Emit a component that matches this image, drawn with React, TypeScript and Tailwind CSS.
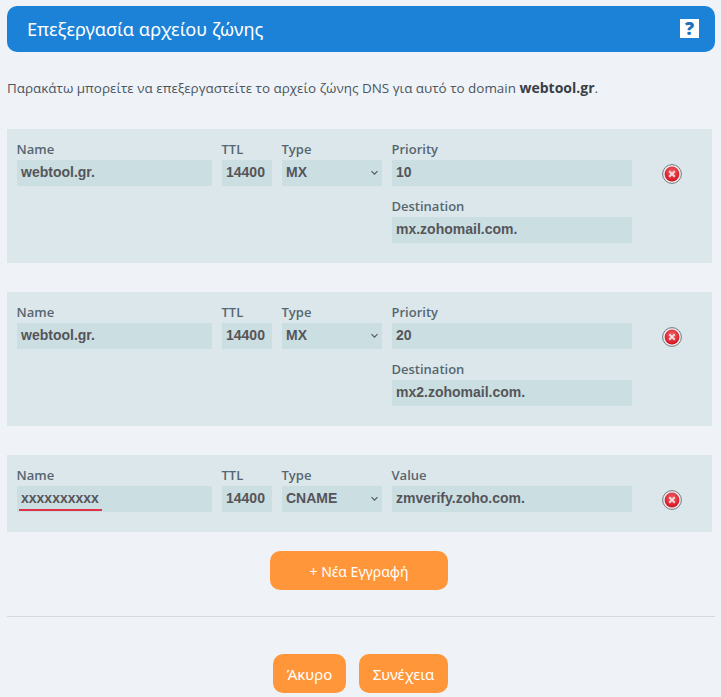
import React from "react";

function Field({ label, value, className = "", chevron = false }: { label: string; value: string; className?: string; chevron?: boolean }) {
  return (
    <div className={`flex flex-col ${className}`}>
      <div className="h-[22px] pt-[2px] -ml-[0.5px] text-[13px] leading-[18px] font-semibold text-[#56666f] font-['Open_Sans',sans-serif]">{label}</div>
      <div className="relative h-[26px] bg-[#cbdee2] pl-[4px] text-[14px] leading-[24px] font-bold text-[#555559] font-['Liberation_Sans',sans-serif]">
        {value}
        {chevron && (
          <svg className="absolute right-[3px] top-[10px] w-[9px] h-[6px]" viewBox="0 0 9 6" fill="none">
            <path d="M1.5 1.2 L4.5 4.2 L7.5 1.2" stroke="#555" strokeWidth="1.1" />
          </svg>
        )}
      </div>
    </div>
  );
}

function DeleteIcon() {
  return (
    <svg width="20" height="20" viewBox="0 0 20 20" className="block">
      <defs>
        <radialGradient id="redg" cx="50%" cy="35%" r="65%">
          <stop offset="0%" stopColor="#f4606a" />
          <stop offset="100%" stopColor="#d0141f" />
        </radialGradient>
      </defs>
      <circle cx="10" cy="10" r="9.4" fill="#e8ecee" stroke="#77797b" strokeWidth="1" />
      <circle cx="10" cy="10" r="7.4" fill="url(#redg)" />
      <path d="M7.2 7.2 L12.8 12.8 M12.8 7.2 L7.2 12.8" stroke="#f3d9d9" strokeWidth="2" />
    </svg>
  );
}

function Row({ name, type, third, thirdLabel, dest, underline = false, className = "" }: { name: string; type: string; third: string; thirdLabel: string; dest?: string; underline?: boolean; className?: string }) {
  return (
    <div className={`w-[705px] bg-[#dce7eb] pl-[10px] pt-[9px] flex ${dest ? "h-[134px]" : "h-[77px]"} ${className}`}>
      <div className="relative w-[195px] mr-[10px]">
        <Field label="Name" value={name} />
        {underline && <div className="absolute left-[2px] top-[45px] w-[83px] h-[2px] bg-[#e0324b]" />}
      </div>
      <Field label="TTL" value="14400" className="w-[50px] mr-[10px]" />
      <Field label="Type" value={type} chevron className="w-[100px] mr-[10px]" />
      <div className="w-[240px] flex flex-col gap-[9px]">
        <Field label={thirdLabel} value={third} />
        {dest && <Field label="Destination" value={dest} />}
      </div>
      <div className="ml-[30px] mt-[26px]"><DeleteIcon /></div>
    </div>
  );
}

function OrangeButton({ children, className = "" }: { children: React.ReactNode; className?: string }) {
  return (
    <button className={`h-[39px] pt-[1px] rounded-[10px] bg-[#ff973a] text-white font-['Noto_Sans',sans-serif] ${className}`}>
      {children}
    </button>
  );
}

export default function App() {
  return (
    <div className="w-[721px] h-[697px] overflow-hidden bg-[#eff3f8] pt-[6px] pl-[7px] font-['Open_Sans',sans-serif]">
      <div className="w-[708px] h-[46px] rounded-[10px] bg-[#1c82d8] flex items-center justify-between pl-[20px] pr-[16px]">
        <span className="mt-[2px] text-white text-[18.2px] font-['Noto_Sans',sans-serif]">Επεξεργασία αρχείου ζώνης</span>
        <span className="w-[19px] h-[19px] -mt-[1px] bg-white text-[#1c6fb8] text-[18px] leading-[19px] font-extrabold text-center font-['Open_Sans',sans-serif]">?</span>
      </div>
      <p className="mt-[26px] h-[20px] text-[13.45px] leading-[20px] text-[#4a5560] whitespace-nowrap">
        Παρακάτω μπορείτε να επεξεργαστείτε το αρχείο ζώνης DNS για αυτό το domain <b className="text-[14px] font-bold text-[#3a3f45]">webtool.gr</b>.
      </p>
      <Row className="mt-[31px]" name="webtool.gr." type="MX" thirdLabel="Priority" third="10" dest="mx.zohomail.com." />
      <Row className="mt-[29px]" name="webtool.gr." type="MX" thirdLabel="Priority" third="20" dest="mx2.zohomail.com." />
      <Row className="mt-[29px]" name="xxxxxxxxxx" type="CNAME" thirdLabel="Value" third="zmverify.zoho.com." underline />
      <div className="w-[708px] mt-[19px] flex justify-center pr-[4px]">
        <OrangeButton className="w-[178px] text-[14px]">+ Νέα Εγγραφή</OrangeButton>
      </div>
      <hr className="w-[708px] mt-[26px] border-0 border-t border-[#d8d8d8]" />
      <div className="mt-[37px] ml-[266px] flex gap-[13px]">
        <OrangeButton className="w-[73px] text-[15px]">Άκυρο</OrangeButton>
        <OrangeButton className="w-[89px] text-[15px]">Συνέχεια</OrangeButton>
      </div>
    </div>
  );
}
